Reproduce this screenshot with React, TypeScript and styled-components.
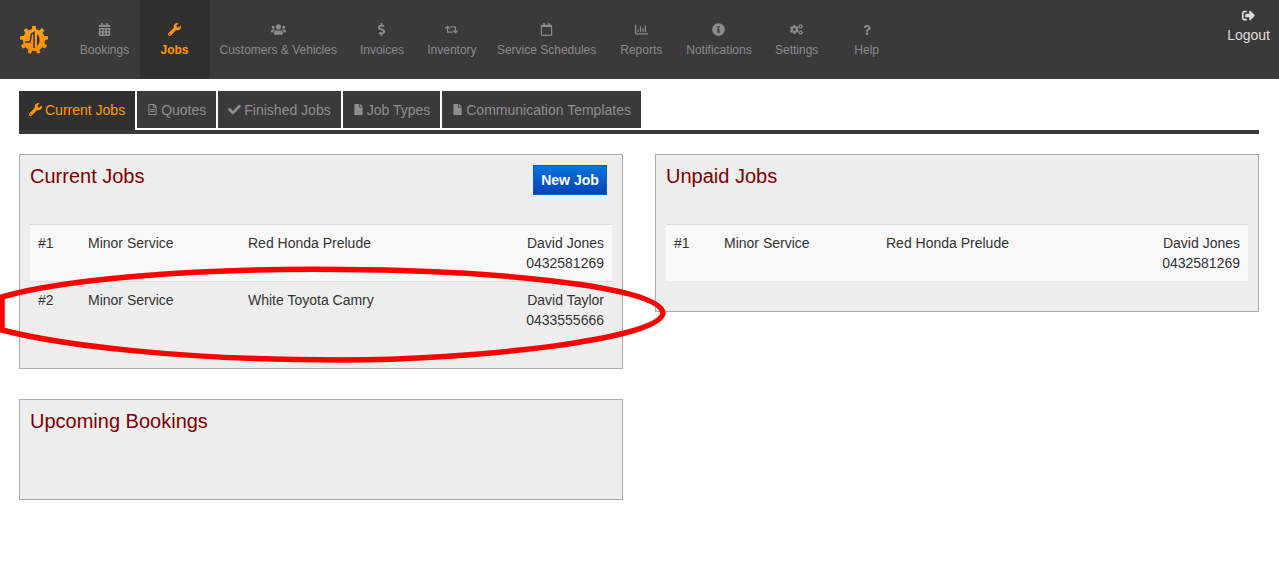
import React from "react";
import styled, { createGlobalStyle } from "styled-components";
import {
  FaCalendarAlt,
  FaCheck,
  FaCogs,
  FaDollarSign,
  FaFile,
  FaInfoCircle,
  FaQuestion,
  FaRegCalendar,
  FaRegChartBar,
  FaRegFileAlt,
  FaRetweet,
  FaSignOutAlt,
  FaUsers,
  FaWrench,
} from "react-icons/fa";

const GlobalStyle = createGlobalStyle`
  html, body {
    margin: 0;
    padding: 0;
    background: #fff;
    font-family: "Liberation Sans", Arial, sans-serif;
    color: #333;
  }
`;

const Page = styled.div`
  position: relative;
  width: 1279px;
  height: 583px;
  overflow: hidden;
`;

const TopBar = styled.header`
  display: flex;
  height: 79px;
  background: #3a3a3a;
`;

const LogoBox = styled.div`
  width: 69.5px;
  flex-shrink: 0;
  display: flex;
  align-items: center;
  justify-content: center;
  padding-right: 1px;
  box-sizing: border-box;
`;

const NavItem = styled.a<{ $active?: boolean }>`
  min-width: 70px;
  box-sizing: border-box;
  padding: 22px 10px 0;
  display: flex;
  flex-direction: column;
  align-items: center;
  gap: 6px;
  font-size: 12px;
  line-height: 15px;
  white-space: nowrap;
  color: ${(p) => (p.$active ? "#f90" : "#8a8a8a")};
  font-weight: ${(p) => (p.$active ? "bold" : "normal")};
  background: ${(p) => (p.$active ? "#303030" : "transparent")};
`;

const NavIcon = styled.span`
  height: 15px;
  display: flex;
  align-items: center;
  font-size: 13px;
`;

const Logout = styled.a`
  margin-left: auto;
  padding: 8px 9px 0 0;
  display: flex;
  flex-direction: column;
  align-items: center;
  gap: 4px;
  font-size: 14px;
  line-height: 16px;
  color: #ddd;
`;

const Content = styled.main`
  padding: 12px 20px 0 19px;
`;

const TabBar = styled.nav`
  display: flex;
  gap: 2px;
  border-bottom: 4px solid #3a3a3a;
`;

const Tab = styled.a<{ $active?: boolean }>`
  height: 37px;
  padding: 0 10px;
  margin-bottom: ${(p) => (p.$active ? "0" : "2px")};
  box-sizing: content-box;
  display: flex;
  align-items: center;
  gap: 3px;
  font-size: 14px;
  white-space: nowrap;
  color: ${(p) => (p.$active ? "#f90" : "#8f8f8f")};
  background: ${(p) => (p.$active ? "#303030" : "#3a3a3a")};
  padding-bottom: ${(p) => (p.$active ? "2px" : "0")};
`;

const Columns = styled.div`
  display: grid;
  grid-template-columns: 604px 604px;
  column-gap: 32px;
  align-items: start;
  margin-top: 20px;
`;

const Column = styled.div`
  display: flex;
  flex-direction: column;
  gap: 30px;
`;

const Panel = styled.section`
  background: #eee;
  border: 1px solid #aaa;
  padding: 10px 10px 30px;
`;

const PanelHead = styled.div`
  height: 59px;
  display: flex;
  justify-content: space-between;
  align-items: flex-start;
`;

const PanelTitle = styled.h2`
  margin: 0;
  font-size: 20px;
  font-weight: normal;
  line-height: 22px;
  color: #800000;
`;

const NewJob = styled.button`
  width: 74px;
  height: 30px;
  margin-right: 5px;
  padding: 0;
  border: 1px solid #0a5fc4;
  background: linear-gradient(#0a74dc, #0044b8);
  color: #fff;
  font-family: inherit;
  font-size: 14px;
  font-weight: bold;
`;

const Row = styled.div<{ $striped?: boolean; $middle: number }>`
  display: grid;
  grid-template-columns: 50px ${(p) => p.$middle}px 1fr auto;
  padding: 8px;
  border-top: 1px solid #ddd;
  font-size: 14px;
  line-height: 20px;
  background: ${(p) => (p.$striped ? "#f9f9f9" : "transparent")};
`;

const Owner = styled.div`
  text-align: right;
`;

const Scribble = styled.svg`
  position: absolute;
  left: 0;
  top: 0;
  pointer-events: none;
`;

// gear outline for the logo, worked out once
const gearPath = (() => {
  const cx = 39;
  const cy = 39;
  const teeth = 9;
  const pts: string[] = [];
  for (let i = 0; i < teeth; i++) {
    const a = (i / teeth) * Math.PI * 2;
    const step = (Math.PI * 2) / teeth;
    const corners: [number, number][] = [
      [11, -0.5 * step],
      [11, -0.27 * step],
      [14.2, -0.17 * step],
      [14.2, 0.17 * step],
      [11, 0.27 * step],
    ];
    corners.forEach(([r, off]) => {
      pts.push(`${(cx + r * Math.sin(a + off)).toFixed(2)},${(cy - r * Math.cos(a + off)).toFixed(2)}`);
    });
  }
  return `M${pts.join("L")}Z`;
})();

const Logo = () => (
  <svg width="30" height="30" viewBox="24 24 30 30">
    <defs>
      <linearGradient id="logoFill" x1="0" y1="0" x2="0" y2="1">
        <stop offset="0" stopColor="#ffa41a" />
        <stop offset="1" stopColor="#f58a00" />
      </linearGradient>
    </defs>
    <path d={gearPath} fill="url(#logoFill)" />
    <path d="M30 41 L35 41 L36.5 33 L39 31.5 L39 47" fill="none" stroke="#3a3a3a" strokeWidth="1.6" />
    <path d="M42 33 C45.5 35 45.5 43 42 45 Z" fill="#3a3a3a" />
  </svg>
);

const navItems = [
  { label: "Bookings", icon: <FaCalendarAlt /> },
  { label: "Jobs", icon: <FaWrench />, active: true },
  { label: "Customers & Vehicles", icon: <FaUsers size={15} /> },
  { label: "Invoices", icon: <FaDollarSign /> },
  { label: "Inventory", icon: <FaRetweet /> },
  { label: "Service Schedules", icon: <FaRegCalendar /> },
  { label: "Reports", icon: <FaRegChartBar /> },
  { label: "Notifications", icon: <FaInfoCircle /> },
  { label: "Settings", icon: <FaCogs /> },
  { label: "Help", icon: <FaQuestion size={10} /> },
];

const tabs = [
  { label: "Current Jobs", icon: <FaWrench size={13} />, active: true },
  { label: "Quotes", icon: <FaRegFileAlt size={11} /> },
  { label: "Finished Jobs", icon: <FaCheck size={13} /> },
  { label: "Job Types", icon: <FaFile size={11} /> },
  { label: "Communication Templates", icon: <FaFile size={11} /> },
];

const JobRow: React.FC<{
  no: string;
  car: string;
  name: string;
  phone: string;
  middle: number;
  striped?: boolean;
}> = ({ no, car, name, phone, middle, striped }) => (
  <Row $middle={middle} $striped={striped}>
    <div>{no}</div>
    <div>Minor Service</div>
    <div>{car}</div>
    <Owner>
      {name}
      <br />
      {phone}
    </Owner>
  </Row>
);

export default function App() {
  return (
    <Page>
      <GlobalStyle />
      <TopBar>
        <LogoBox>
          <Logo />
        </LogoBox>
        {navItems.map((item) => (
          <NavItem key={item.label} $active={item.active}>
            <NavIcon>{item.icon}</NavIcon>
            {item.label}
          </NavItem>
        ))}
        <Logout>
          <NavIcon>
            <FaSignOutAlt />
          </NavIcon>
          Logout
        </Logout>
      </TopBar>
      <Content>
        <TabBar>
          {tabs.map((tab) => (
            <Tab key={tab.label} $active={tab.active}>
              {tab.icon}
              {tab.label}
            </Tab>
          ))}
        </TabBar>
        <Columns>
          <Column>
            <Panel>
              <PanelHead>
                <PanelTitle>Current Jobs</PanelTitle>
                <NewJob>New Job</NewJob>
              </PanelHead>
              <JobRow no="#1" car="Red Honda Prelude" name="David Jones" phone="0432581269" middle={160} striped />
              <JobRow no="#2" car="White Toyota Camry" name="David Taylor" phone="0433555666" middle={160} />
            </Panel>
            <Panel>
              <PanelHead>
                <PanelTitle>Upcoming Bookings</PanelTitle>
              </PanelHead>
            </Panel>
          </Column>
          <Column>
            <Panel>
              <PanelHead>
                <PanelTitle>Unpaid Jobs</PanelTitle>
              </PanelHead>
              <JobRow no="#1" car="Red Honda Prelude" name="David Jones" phone="0432581269" middle={162} striped />
            </Panel>
          </Column>
        </Columns>
      </Content>
      <Scribble width="1279" height="583">
        <path
          d="M2 297 C60 280 190 268 340 269.5 C480 270 660 285 663 313 C660 340 470 360 340 360 C180 360 60 345 2 330 Z"
          fill="none"
          stroke="#f00"
          strokeWidth="5.5"
        />
      </Scribble>
    </Page>
  );
}
